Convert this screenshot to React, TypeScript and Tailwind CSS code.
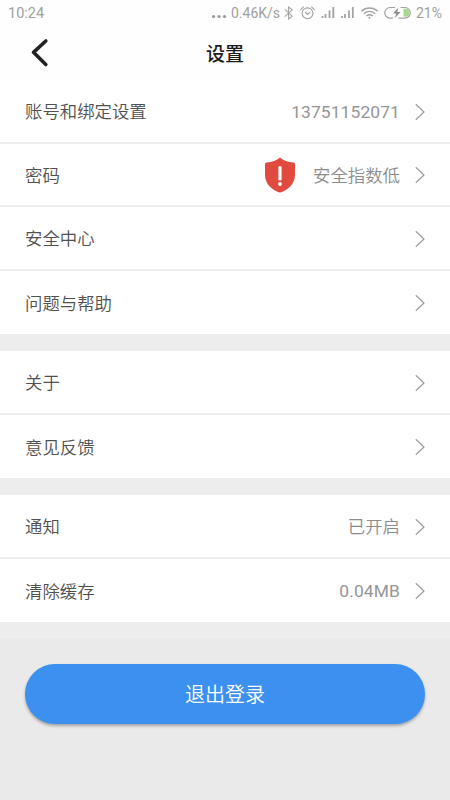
import React from "react";

interface RowProps {
  label: string;
  value?: string;
  warning?: boolean;
  last?: boolean;
}

const StatusIcons = () => {
  return (
    <svg
      className="shrink-0"
      width="131"
      height="26"
      viewBox="0 0 131 26"
      fill="none"
      stroke="#a3a3a3"
    >
      {/* bluetooth */}
      <path d="M4.8 9.4 12.2 16.2 8.6 19V7L12.2 9.8 4.8 16.6" strokeWidth="1.1" />
      {/* alarm */}
      <circle cx="27.5" cy="13.3" r="5.4" strokeWidth="1.1" />
      <path
        d="M25.1 12.2 27.5 14.4 30.1 12.2M20.5 9.8 23.6 6.6M34.5 9.8 31.4 6.6"
        strokeWidth="1.2"
      />
      {/* signal bars */}
      <path d="M42.5 18v-2M45.5 18v-4M49.5 18v-7.5M53.3 18V7" strokeWidth="1.8" />
      <path d="M62 18v-2M65 18v-4M69 18v-7.5M72.8 18V7" strokeWidth="1.8" />
      {/* wifi */}
      <path
        d="M81.3 11.2c4.8-4.4 11.6-4.4 16.4 0M83.8 13.7c3.4-3 8-3 11.4 0M86.4 16c2-1.7 4.4-1.7 6.4 0"
        strokeWidth="1.5"
      />
      <circle cx="89.5" cy="17.8" r="1" fill="#a3a3a3" stroke="none" />
      {/* battery */}
      <path
        d="M115 7.5h-5a5.3 5.3 0 0 0 0 10.6h3M120.5 7.5h4.5a5.3 5.3 0 0 1 0 10.6h-6.5"
        strokeWidth="1.2"
      />
      <path d="M123.5 8.8h2a4 4 0 0 1 0 8h-2z" fill="#a9d98c" stroke="none" />
      <path
        d="M118.5 7.5 113 13.6h3.2l-1.4 4.7 5.7-6.3h-3.3z"
        fill="#8f8f8f"
        stroke="none"
      />
    </svg>
  );
};

const StatusBar = () => {
  return (
    <div className="flex h-[26px] items-center px-2 text-[14px] text-[#a0a0a0]">
      <span className="pt-[2px] text-[14.5px]">10:24</span>
      <div className="ml-auto flex h-[26px] items-center">
        <svg className="shrink-0" width="16" height="26" viewBox="0 0 16 26" fill="#999">
          <circle cx="2.5" cy="16.5" r="1.6" />
          <circle cx="8" cy="16.5" r="1.6" />
          <circle cx="13.5" cy="16.5" r="1.6" />
        </svg>
        <span className="ml-1 w-[49px] pt-[1px] whitespace-nowrap">0.46K/s</span>
        <StatusIcons />
        <span className="ml-[5px] w-[26px] pt-[1px] whitespace-nowrap">21%</span>
      </div>
    </div>
  );
};

const Header = () => {
  return (
    <div className="grid h-[54px] grid-cols-3 items-center">
      <svg className="ml-[29px]" width="20" height="30" viewBox="0 0 20 30" fill="none">
        <path
          d="M16.8 3 4.5 14.3 16.8 26.5"
          stroke="#222"
          strokeWidth="3.6"
          strokeLinecap="round"
          strokeLinejoin="round"
        />
      </svg>
      <h1 className="pt-1 text-center text-[19px] font-medium text-[#1c1c1c]">设置</h1>
    </div>
  );
};

const Shield = () => {
  return (
    <svg className="mr-[17px]" width="32" height="36" viewBox="0 0 32 36">
      <path
        d="M16 .5C12.5 3.7 8.5 5.2 2.5 5.4Q1 5.4 1 7V17.5C1 26.5 7 32 14 35Q16 35.8 18 35C25 32 31 26.5 31 17.5V7Q31 5.4 29.5 5.4C23.5 5.2 19.5 3.7 16 .5Z"
        fill="#e04a3f"
      />
      <path d="M16 10.5V22" stroke="#fff" strokeWidth="3.2" strokeLinecap="round" />
      <circle cx="16" cy="27" r="1.9" fill="#fff" />
    </svg>
  );
};

const Row = ({ label, value, warning, last }: RowProps) => {
  return (
    <li
      className={`flex h-[63.5px] items-center px-[25px] pt-[2px] ${
        last ? "" : "border-b-2 border-[#ededed]"
      }`}
    >
      <span className="pt-[1px] text-[17.4px] font-[350] text-[#505050]">{label}</span>
      <div className="ml-auto flex items-center">
        {warning && <Shield />}
        {value && (
          <span
            className={`text-[17.4px] ${
              /^[\d.]/.test(value)
                ? "tracking-[0.12px] text-[#959595]"
                : "pt-[1px] font-[350] text-[#8c8c8c]"
            }`}
          >
            {value}
          </span>
        )}
        <svg className="ml-[15px]" width="10" height="18" viewBox="0 0 10 18" fill="none">
          <path d="M.8 1.2 9 9 .8 16.8" stroke="#9a9a9a" strokeWidth="1.2" />
        </svg>
      </div>
    </li>
  );
};

export default function App() {
  return (
    <div className="flex h-[800px] w-[450px] flex-col bg-[#eaeaea] font-[Roboto,'Noto_Sans_CJK_SC',sans-serif]">
      <div className="bg-[#fefefe]">
        <StatusBar />
        <Header />
      </div>
      <div className="flex flex-col gap-[17px] bg-[#ededed] pb-[17px]">
        <ul className="bg-white">
          <Row label="账号和绑定设置" value="13751152071" />
          <Row label="密码" value="安全指数低" warning />
          <Row label="安全中心" />
          <Row label="问题与帮助" last />
        </ul>
        <ul className="bg-white">
          <Row label="关于" />
          <Row label="意见反馈" last />
        </ul>
        <ul className="bg-white">
          <Row label="通知" value="已开启" />
          <Row label="清除缓存" value="0.04MB" last />
        </ul>
      </div>
      <button className="mx-[25px] mt-[25px] h-[60px] rounded-full bg-[#3c90ef] pt-[2px] text-[20px] font-[350] text-white shadow-[0_2px_3px_rgba(0,0,0,0.3)]">
        退出登录
      </button>
    </div>
  );
}
